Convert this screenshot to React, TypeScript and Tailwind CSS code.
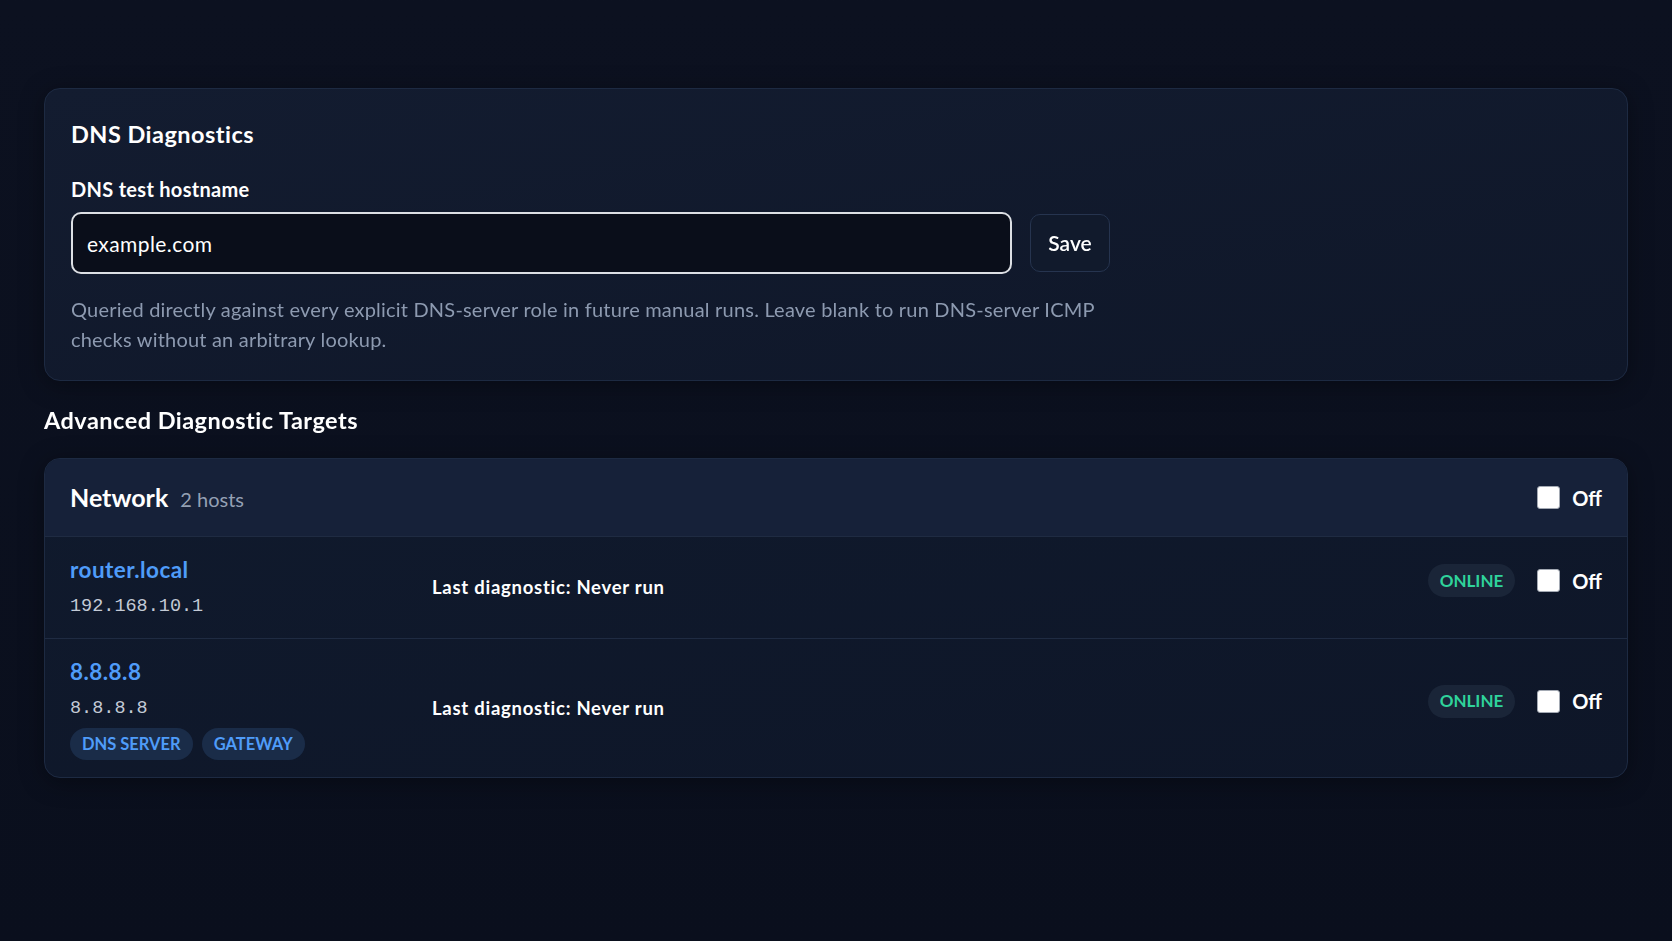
import { useState } from 'react';

type Host = {
  name: string;
  address: string;
  roles: string[];
};

const hosts: Host[] = [
  { name: 'router.local', address: '192.168.10.1', roles: [] },
  { name: '8.8.8.8', address: '8.8.8.8', roles: ['DNS SERVER', 'GATEWAY'] },
];

const Toggle = ({ on, onChange }: { on: boolean; onChange: (v: boolean) => void }) => (
  <label className="flex items-center gap-[12px] cursor-pointer">
    <input
      type="checkbox"
      checked={on}
      onChange={(e) => onChange(e.target.checked)}
      className="appearance-none w-[23px] h-[23px] rounded-[3px] bg-white border border-[#a3a9b3] checked:bg-[#3b82f6]"
    />
    <span className="text-[20px] leading-[30px] font-bold text-white">{on ? 'On' : 'Off'}</span>
  </label>
);

const HostRow = ({ host }: { host: Host }) => {
  const [enabled, setEnabled] = useState(false);
  return (
    <div className="flex items-center border-t border-[#1f2b42] px-[25px] py-[17px]">
      <div className="w-[362px] shrink-0">
        <div className="text-[22.5px] leading-[32px] font-bold tracking-[0.02em] text-[#4f9cf9]">{host.name}</div>
        <div className="mt-[7px] font-['Liberation_Mono',monospace] text-[18.5px] leading-[28px] text-[#c3cad6]">
          {host.address}
        </div>
        {host.roles.length > 0 && (
          <div className="mt-[5px] flex gap-[9px]">
            {host.roles.map((r) => (
              <span
                key={r}
                className="h-[32px] flex items-center rounded-full bg-[#1a2c48] px-[12px] text-[16.5px] font-bold text-[#4f9cf9]"
              >
                {r}
              </span>
            ))}
          </div>
        )}
      </div>
      <div className="flex-1 text-[18.5px] leading-[27px] font-bold tracking-[0.04em] text-white">
        Last diagnostic: Never run
      </div>
      {/* status + toggle sit a little above centre */}
      <div className="flex items-center gap-[22px] pb-[14px]">
        <span className="h-[33px] flex items-center rounded-full bg-[#1a2538] px-[12px] text-[17px] font-bold text-[#2fd39b]">
          ONLINE
        </span>
        <Toggle on={enabled} onChange={setEnabled} />
      </div>
    </div>
  );
};

export default function App() {
  const [hostname, setHostname] = useState('example.com');
  const [groupOn, setGroupOn] = useState(false);

  return (
    <div className="min-h-screen bg-gradient-to-b from-[#0c1120] to-[#0a0f1d] px-[44px] pt-[88px] pb-16 text-white font-['Lato','Noto_Sans',sans-serif]">
      {/* DNS test settings */}
      <section className="rounded-[16px] border border-[#1d2a42] bg-gradient-to-br from-[#131c30] to-[#0f1729] px-[26px] pt-[28px] pb-[26px] shadow-[0_4px_24px_rgba(0,0,0,0.35)]">
        <h2 className="text-[23.5px] leading-[35px] font-bold tracking-[0.02em]">DNS Diagnostics</h2>
        <label htmlFor="dns-host" className="mt-[22px] block text-[20px] leading-[30px] font-bold tracking-[0.015em]">
          DNS test hostname
        </label>
        <div className="mt-[8px] flex items-center gap-[18px] w-[1040px]">
          <input
            id="dns-host"
            autoFocus
            value={hostname}
            onChange={(e) => setHostname(e.target.value)}
            className="h-[62px] w-[941px] rounded-[10px] border-2 border-[#dcdfe4] bg-[#0a0e1a] px-[14px] text-[21px] tracking-[0.02em] text-white caret-white outline-none"
          />
          <button className="h-[58px] w-[80px] rounded-[10px] border border-[#26344f] bg-[#111a2c] text-[21px] font-semibold text-white">
            Save
          </button>
        </div>
        <p className="mt-[20px] max-w-[1040px] text-[20px] leading-[30px] tracking-[0.01em] text-[#8d9ab0]">
          Queried directly against every explicit DNS-server role in future manual runs. Leave blank to run DNS-server
          ICMP checks without an arbitrary lookup.
        </p>
      </section>

      <h2 className="mt-[22px] text-[23.5px] leading-[35px] font-bold tracking-[0.02em]">Advanced Diagnostic Targets</h2>

      {/* host group */}
      <section className="mt-[20px] overflow-hidden rounded-[16px] border border-[#1d2a42] bg-gradient-to-br from-[#101a2d] to-[#0e1628] shadow-[0_4px_24px_rgba(0,0,0,0.35)]">
        <div className="flex h-[77px] items-center justify-between bg-[#162139] px-[25px]">
          <div className="flex items-baseline gap-[12px]">
            <span className="text-[25px] font-bold">Network</span>
            <span className="text-[20px] text-[#94a0b4]">2 hosts</span>
          </div>
          <Toggle on={groupOn} onChange={setGroupOn} />
        </div>
        {hosts.map((h) => (
          <HostRow key={h.name} host={h} />
        ))}
      </section>
    </div>
  );
}
